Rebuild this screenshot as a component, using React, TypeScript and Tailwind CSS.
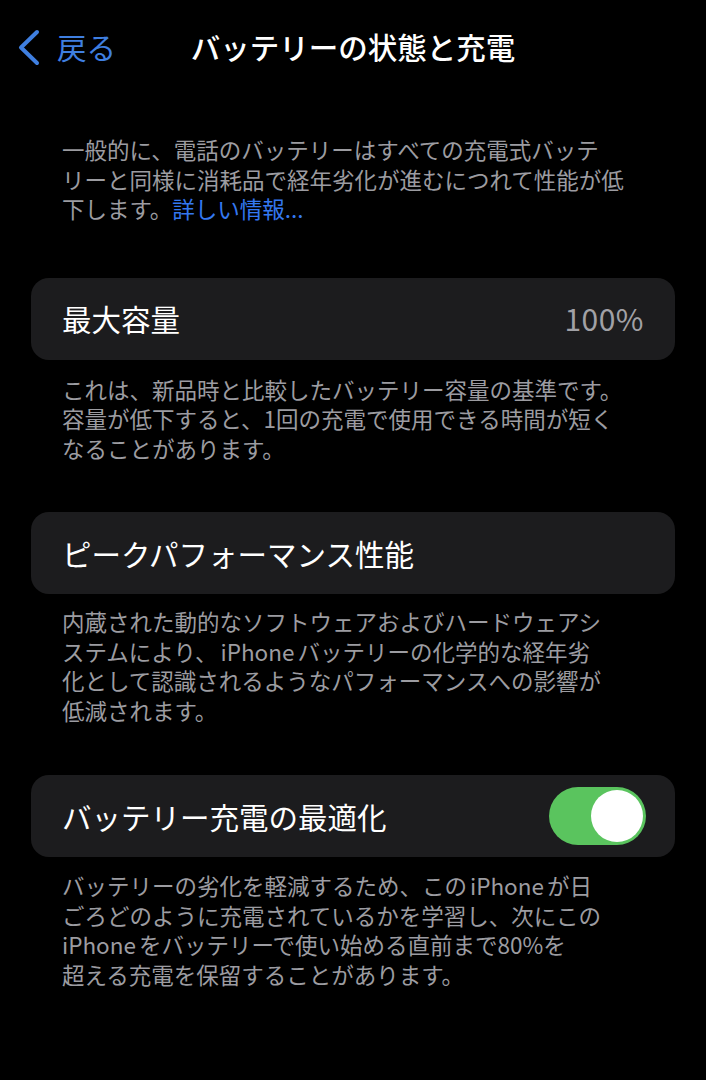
import React from "react";

const FONT = '"Noto Sans CJK JP", "Noto Sans", "Liberation Sans", sans-serif';

function Caption({ lines, className }: { lines: React.ReactNode[]; className?: string }) {
  return (
    <p className={`px-[31px] text-[22.5px] leading-[29.5px] text-[#9c9ca1] whitespace-nowrap ${className ?? ""}`}>
      {lines.map((l, i) => (
        <React.Fragment key={i}>
          {l}
          {i < lines.length - 1 && <br />}
        </React.Fragment>
      ))}
    </p>
  );
}

const IP = <span className="px-[3px]">iPhone</span>;

export default function App() {
  return (
    <div className="min-h-[1080px] w-full bg-black" style={{ fontFamily: FONT }}>
      <nav className="grid h-[94px] grid-cols-[1fr_auto_1fr] items-center">
        <div className="flex items-center pl-[16px]">
          <svg width="24" height="38" viewBox="0 0 24 38" fill="none">
            <polyline
              points="21,4 5,19.5 21,35"
              stroke="#3f7fe0"
              strokeWidth="4"
              strokeLinecap="round"
              strokeLinejoin="round"
            />
          </svg>
          <span className="ml-[17px] text-[29.5px] leading-none text-[#3f7fe0]">戻る</span>
        </div>
        <h1 className="text-[29.5px] font-medium leading-none text-white">バッテリーの状態と充電</h1>
        <div />
      </nav>

      <div className="px-[31px]">
        <Caption
          className="mt-[41px]"
          lines={[
            "一般的に、電話のバッテリーはすべての充電式バッテ",
            "リーと同様に消耗品で経年劣化が進むにつれて性能が低",
            <>
              下します。<span className="text-[#3478f0]">詳しい情報...</span>
            </>,
          ]}
        />

        <div className="mt-[54px] flex h-[82px] items-center justify-between rounded-[18px] bg-[#1c1c1e] px-[31px]">
          <span className="text-[29.5px] text-white">最大容量</span>
          <span className="text-[30px] tracking-[0.5px] text-[#a1a1a6]">100%</span>
        </div>
        <Caption
          className="mt-[15px]"
          lines={[
            "これは、新品時と比較したバッテリー容量の基準です。",
            "容量が低下すると、1回の充電で使用できる時間が短く",
            "なることがあります。",
          ]}
        />

        <div className="mt-[49px] flex h-[82px] items-center rounded-[18px] bg-[#1c1c1e] px-[31px]">
          <span className="text-[29.5px] text-white">ピークパフォーマンス性能</span>
        </div>
        <Caption
          className="mt-[13px]"
          lines={[
            "内蔵された動的なソフトウェアおよびハードウェアシ",
            <>ステムにより、{IP}バッテリーの化学的な経年劣</>,
            "化として認識されるようなパフォーマンスへの影響が",
            "低減されます。",
          ]}
        />

        <div className="mt-[50px] flex h-[82px] items-center justify-between rounded-[18px] bg-[#1c1c1e] pl-[31px] pr-[29px]">
          <span className="text-[29.5px] text-white">バッテリー充電の最適化</span>
          <div className="flex h-[58px] w-[97px] items-center justify-end rounded-full bg-[#5ac45e] p-[3px]">
            <div className="h-[52px] w-[52px] rounded-full bg-white" />
          </div>
        </div>
        <Caption
          className="mt-[14px]"
          lines={[
            <>バッテリーの劣化を軽減するため、この{IP}が日</>,
            "ごろどのように充電されているかを学習し、次にこの",
            <>
              <span className="pr-[3px]">iPhone</span>をバッテリーで使い始める直前まで80%を
            </>,
            "超える充電を保留することがあります。",
          ]}
        />
      </div>
    </div>
  );
}
